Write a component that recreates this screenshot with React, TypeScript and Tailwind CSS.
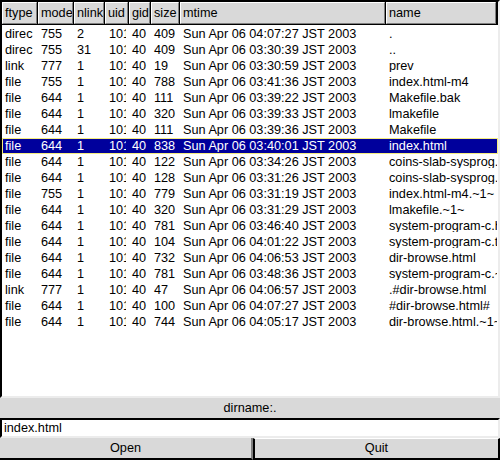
import React from 'react';

type Row = {
  ftype: string;
  mode: string;
  nlink: string;
  size: string;
  time: string;
  name: string;
};

const rows: Row[] = [
  { ftype: 'direc', mode: '755', nlink: '2', size: '409', time: '04:07:27', name: '.' },
  { ftype: 'direc', mode: '755', nlink: '31', size: '409', time: '03:30:39', name: '..' },
  { ftype: 'link', mode: '777', nlink: '1', size: '19', time: '03:30:59', name: 'prev' },
  { ftype: 'file', mode: '755', nlink: '1', size: '788', time: '03:41:36', name: 'index.html-m4' },
  { ftype: 'file', mode: '644', nlink: '1', size: '111', time: '03:39:22', name: 'Makefile.bak' },
  { ftype: 'file', mode: '644', nlink: '1', size: '320', time: '03:39:33', name: 'lmakefile' },
  { ftype: 'file', mode: '644', nlink: '1', size: '111', time: '03:39:36', name: 'Makefile' },
  { ftype: 'file', mode: '644', nlink: '1', size: '838', time: '03:40:01', name: 'index.html' },
  { ftype: 'file', mode: '644', nlink: '1', size: '122', time: '03:34:26', name: 'coins-slab-sysprog.html' },
  { ftype: 'file', mode: '644', nlink: '1', size: '128', time: '03:31:26', name: 'coins-slab-sysprog.txt' },
  { ftype: 'file', mode: '755', nlink: '1', size: '779', time: '03:31:19', name: 'index.html-m4.~1~' },
  { ftype: 'file', mode: '644', nlink: '1', size: '320', time: '03:31:29', name: 'lmakefile.~1~' },
  { ftype: 'file', mode: '644', nlink: '1', size: '781', time: '03:46:40', name: 'system-program-c.html' },
  { ftype: 'file', mode: '644', nlink: '1', size: '104', time: '04:01:22', name: 'system-program-c.txt' },
  { ftype: 'file', mode: '644', nlink: '1', size: '732', time: '04:06:53', name: 'dir-browse.html' },
  { ftype: 'file', mode: '644', nlink: '1', size: '781', time: '03:48:36', name: 'system-program-c.~1~' },
  { ftype: 'link', mode: '777', nlink: '1', size: '47', time: '04:06:57', name: '.#dir-browse.html' },
  { ftype: 'file', mode: '644', nlink: '1', size: '100', time: '04:07:27', name: '#dir-browse.html#' },
  { ftype: 'file', mode: '644', nlink: '1', size: '744', time: '04:05:17', name: 'dir-browse.html.~1~' },
];

const SELECTED = 7;

const Head = ({ label, className }: { label: string; className: string }) => (
  <div
    className={`${className} shrink-0 h-full bg-[#d9d9d9] border-t border-l border-t-white border-l-white border-b border-r border-b-[#7f7f7f] border-r-[#7f7f7f] pl-[2px] flex items-center overflow-hidden whitespace-nowrap`}
  >
    {label}
  </div>
);

export default function App() {
  return (
    <div
      className="w-[500px] h-[460px] bg-[#d9d9d9] text-black text-[12.7px] leading-none flex flex-col overflow-hidden"
      style={{ fontFamily: '"Liberation Sans", Arial, sans-serif' }}
    >
      {/* listbox */}
      <div className="h-[398px] w-[500px] bg-white border-2 border-t-black border-l-black border-b-[#ececec] border-r-[#ececec] flex flex-col overflow-hidden">
        <div className="h-[23px] flex bg-black gap-px pr-[2px] pb-px">
          <Head label="ftype" className="w-[35px]" />
          <Head label="mode" className="w-[35px]" />
          <Head label="nlink" className="w-[30px]" />
          <Head label="uid" className="w-[23px]" />
          <Head label="gid" className="w-[21px]" />
          <Head label="size" className="w-[28px]" />
          <Head label="mtime" className="w-[205px]" />
          <Head label="name" className="flex-1" />
        </div>
        <div className="flex flex-col pt-px">
          {rows.map((r, i) => {
            const sel = i === SELECTED;
            return (
              <div
                key={i}
                className={`h-[16px] flex items-center whitespace-nowrap border ${
                  sel ? 'bg-[#00009c] text-white border-[#f4ec80]' : 'border-transparent'
                }`}
              >
                <div className="w-[35px] shrink-0 pl-[2px] overflow-hidden">{r.ftype}</div>
                <div className="w-[36px] shrink-0 pl-[3px] overflow-hidden">{r.mode}</div>
                <div className="w-[31px] shrink-0 pl-[3px] overflow-hidden">{r.nlink}</div>
                <div className="w-[24px] shrink-0 pl-[4px]">
                  <div className="w-[16.5px] overflow-hidden">1011</div>
                </div>
                <div className="w-[22px] shrink-0 pl-[3px] overflow-hidden">40</div>
                <div className="w-[29px] shrink-0 pl-[3px] overflow-hidden">{r.size}</div>
                <div className="w-[207px] shrink-0 pl-[3px] overflow-hidden">Sun Apr 06 {r.time} JST 2003</div>
                <div className="flex-1 min-w-0 pl-[2px] overflow-hidden">{r.name}</div>
              </div>
            );
          })}
        </div>
      </div>

      {/* dirname label */}
      <div className="h-[20px] flex items-center justify-center">dirname:.</div>

      {/* entry */}
      <div className="h-[20px] bg-white border-t-2 border-l-2 border-t-black border-l-black border-b-2 border-r-2 border-b-[#ececec] border-r-[#ececec] flex items-center pl-[2px]">
        index.html
      </div>

      {/* buttons */}
      <div className="h-[22px] flex">
        <button className="w-[253px] h-full bg-[#d9d9d9] border-b-2 border-b-black border-r-2 border-r-[#7f7f7f] flex items-center justify-center">
          Open
        </button>
        <button className="flex-1 h-full bg-[#d9d9d9] border-l-2 border-l-black border-b-2 border-b-black border-r-2 border-r-black border-t border-t-white flex items-center justify-center">
          Quit
        </button>
      </div>
    </div>
  );
}
